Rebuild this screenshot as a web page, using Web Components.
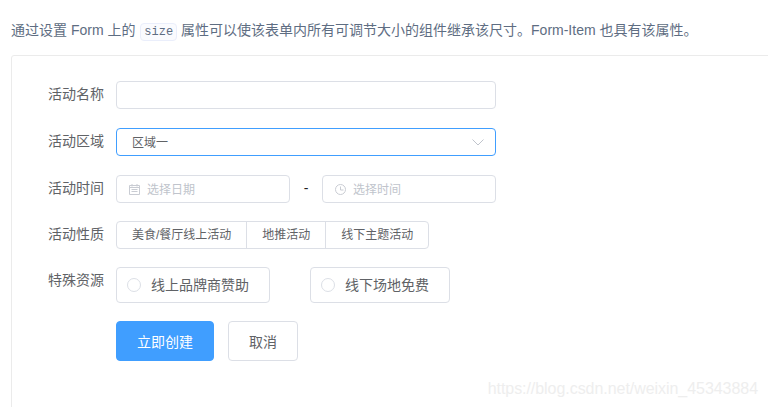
<!DOCTYPE html>
<html lang="zh">
<head>
<meta charset="utf-8">
<title>Form size</title>
<style>
  html, body { margin: 0; height: 100%; overflow: hidden; background: #fff; }
  body { font-family: "Liberation Sans", "Noto Sans CJK SC", sans-serif; }
</style>
</head>
<body>
<demo-page>
  <demo-desc>通过设置 Form 上的 <code-tag>size</code-tag> 属性可以使该表单内所有可调节大小的组件继承该尺寸。Form-Item 也具有该属性。</demo-desc>
  <demo-card>
    <form-row label="活动名称"><text-box></text-box></form-row>
    <form-row label="活动区域"><select-box value="区域一"></select-box></form-row>
    <form-row label="活动时间" tight>
      <picker-box kind="date" placeholder="选择日期"></picker-box>
      <range-dash>-</range-dash>
      <picker-box kind="time" placeholder="选择时间"></picker-box>
    </form-row>
    <form-row label="活动性质" tight>
      <check-group>
        <check-btn>美食/餐厅线上活动</check-btn>
        <check-btn>地推活动</check-btn>
        <check-btn>线下主题活动</check-btn>
      </check-group>
    </form-row>
    <form-row label="特殊资源" gap="40" height="36" tight>
      <radio-box>线上品牌商赞助</radio-box>
      <radio-box>线下场地免费</radio-box>
    </form-row>
    <form-row gap="14" height="40">
      <action-btn primary>立即创建</action-btn>
      <action-btn>取消</action-btn>
    </form-row>
  </demo-card>
  <water-mark>https://blog.csdn.net/weixin_45343884</water-mark>
</demo-page>

<script>
function define(name, css, html, extra) {
  const template = document.createElement("template");
  template.innerHTML = `<style>${css}</style>${html}`;
  customElements.define(name, class extends HTMLElement {
    constructor() {
      super();
      this.attachShadow({ mode: "open" }).appendChild(template.content.cloneNode(true));
    }
    connectedCallback() {
      if (extra) extra(this, this.shadowRoot);
    }
  });
}

const boxCss = `
  :host { display: flex; align-items: center; box-sizing: border-box; height: 28px;
    border: 1px solid #dcdfe6; border-radius: 4px; background: #fff; }
`;

define("demo-page", `
  :host { display: block; position: relative; height: 407px; overflow: hidden; padding: 22px 0 0 11px; box-sizing: border-box; }
`, `<slot></slot>`);

define("demo-desc", `
  :host { display: block; height: 33px; font-size: 14px; line-height: 17px; color: #5e6d82; white-space: nowrap; }
`, `<slot></slot>`);

define("code-tag", `
  :host { display: inline-block; box-sizing: border-box; height: 18px; margin-left: 1px; padding: 0 3px;
    border: 1px solid #eaeefb; border-radius: 4px; background: #fafbfe;
    font: 12px/16px "Liberation Mono", monospace; color: #5e6d82; vertical-align: 0; }
`, `<slot></slot>`);

define("demo-card", `
  :host { display: block; box-sizing: border-box; width: 780px; height: 380px; padding: 25px 0 0 0;
    border: 1px solid #ebebeb; border-radius: 3px; }
`, `<slot></slot>`);

define("form-row", `
  :host { display: flex; margin-bottom: 19px; }
  :host([tight]) { margin-bottom: 18px; }
  .label { flex: none; box-sizing: border-box; width: 104px; padding-right: 12px; height: 28px;
    font-size: 14px; line-height: 27px; text-align: right; color: #606266; white-space: nowrap; }
  .body { display: flex; align-items: center; width: 380px; height: 28px; }
`, `<div class="label"></div><div class="body"><slot></slot></div>`, (el, root) => {
  root.querySelector(".label").textContent = el.getAttribute("label") || "";
  const body = root.querySelector(".body");
  if (el.hasAttribute("gap")) body.style.gap = el.getAttribute("gap") + "px";
  if (el.hasAttribute("height")) body.style.height = el.getAttribute("height") + "px";
});

define("text-box", boxCss + `:host { flex: 1; }`, ``);

define("select-box", boxCss + `
  :host { flex: 1; justify-content: space-between; padding: 0 11px 0 15px; border-color: #409eff;
    font-size: 12px; color: #606266; }
  span { position: relative; top: -1px; }
  svg { display: block; }
`, `<span></span><svg width="12" height="7" viewBox="0 0 12 7" fill="none" stroke="#c0c4cc"><path d="M.5.5 6 6l5.500-5.500"/></svg>`, (el, root) => {
  root.querySelector("span").textContent = el.getAttribute("value");
});

define("picker-box", boxCss + `
  :host { flex: 1; gap: 7px; padding-left: 12px; font-size: 12px; color: #c0c4cc; white-space: nowrap; }
  svg { display: block; flex: none; }
  span { position: relative; top: -1px; }
`, `<svg width="11" height="11" viewBox="0 0 11 11" fill="none" stroke="#c9ccd3"></svg><span></span>`, (el, root) => {
  root.querySelector("span").textContent = el.getAttribute("placeholder");
  root.querySelector("svg").innerHTML = el.getAttribute("kind") === "date"
    ? `<path d="M.5 1.500h10v9H.5zM.5 3.500h10M3 0v2.500M8 0v2.500M2.500 5.500h6M2.500 7.500h6"/>`
    : `<circle cx="5.500" cy="5.500" r="5"/><path d="M5.500 2.500v3.500h3"/>`;
});

define("range-dash", `
  :host { flex: none; width: 32px; text-align: center; font-size: 14px; line-height: 16px; color: #222; position: relative; top: -1px; }
`, `<slot></slot>`);

define("check-group", `
  :host { display: flex; box-sizing: border-box; height: 28px; border: 1px solid #dcdfe6; border-radius: 4px; background: #fff; }
`, `<slot></slot>`);

define("check-btn", `
  :host { display: block; padding: 0 15px; font-size: 12px; line-height: 26px; color: #606266;
    border-left: 1px solid #dcdfe6; white-space: nowrap; }
  :host(:first-child) { border-left: 0; }
`, `<slot></slot>`);

define("radio-box", boxCss + `
  :host { height: 36px; padding: 0 20px 0 10px; gap: 10px; font-size: 14px; color: #606266; white-space: nowrap; }
  i { display: block; flex: none; box-sizing: border-box; width: 14px; height: 14px; border: 1px solid #dcdfe6; border-radius: 50%; }
  span { position: relative; top: -1px; }
`, `<i></i><span><slot></slot></span>`);

define("action-btn", boxCss + `
  :host { height: 40px; justify-content: center; padding: 0 20px; font-size: 14px; color: #606266; white-space: nowrap; }
  :host([primary]) { background: #409eff; border-color: #409eff; color: #fff; }
`, `<slot></slot>`);

define("water-mark", `
  :host { position: absolute; right: 10px; top: 379px; font-size: 16px; line-height: 19px; letter-spacing: -0.05px; color: #eee; white-space: nowrap; }
`, `<slot></slot>`);
</script>
</body>
</html>
